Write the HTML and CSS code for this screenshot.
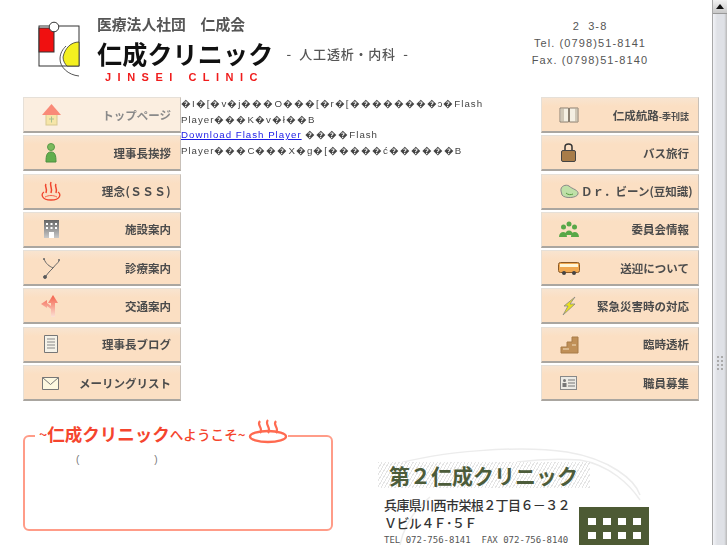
FILE: index.html
```html
<!DOCTYPE html>
<html lang="ja">
<head>
    <meta charset="UTF-8">
    <meta name="viewport" content="width=device-width, initial-scale=1.0">
    <title>仁成クリニック</title>
    <link rel="stylesheet" href="styles.css">
</head>
<body>
<div class="page">
    <div class="content">
        <div class="header">
            <svg class="logo" width="44" height="60" viewBox="0 0 44 60">
                <rect x="1" y="5" width="40" height="40" fill="#fff" stroke="#333" stroke-width="1"/>
                <rect x="1" y="7" width="15" height="24" fill="#f01010" stroke="#333" stroke-width="1"/>
                <path d="M41 45V21C33 21 27 27 25 36C25 40 27 43 29 45Z" fill="#f4f020" stroke="#333" stroke-width=".8"/>
                <path d="M41 55C30 54 22 46 22 38C22 32 25 28 28 25" fill="none" stroke="#555" stroke-width="1"/>
                <circle cx="16" cy="6" r="4.800" fill="#fff" stroke="#333" stroke-width="1"/>
            </svg>
            <div class="brand">
                <div class="corp">医療法人社団　仁成会</div>
                <div class="name-row">
                    <div class="name">仁成クリニック</div>
                    <div class="dept">-&nbsp; 人工透析・内科 &nbsp;-</div>
                </div>
                <div class="roman">JINSEI CLINIC</div>
            </div>
            <div class="contact">
                <div>2 &nbsp;3-8</div>
                <div>Tel. (0798)51-8141</div>
                <div>Fax. (0798)51-8140</div>
            </div>
        </div>

        <div class="columns">
            <div class="menu">
                <a class="btn btn-top">
                    <svg class="icon" width="24" height="24" viewBox="0 0 24 24"><rect x="7" y="11" width="11" height="11" fill="#f6e6a8" stroke="#d8c890"/><path d="M10 16h5M12.5 13.500v6" stroke="#a8c090"/><path d="M12.500 1L22 12H3Z" fill="#f98a78"/></svg>
                    <span>トップページ</span>
                </a>
                <a class="btn">
                    <svg class="icon" width="24" height="24" viewBox="0 0 24 24"><circle cx="12" cy="6" r="3.500" fill="#7cba5c" stroke="#5a9a48"/><path d="M7 21C7 14 8 11 12 11S17 14 17 21Z" fill="#62ae4c" stroke="#4c9040"/></svg>
                    <span>理事長挨拶</span>
                </a>
                <a class="btn">
                    <svg class="icon" width="24" height="24" viewBox="0 0 24 24" fill="none" stroke="#f0442c"><path d="M7 5C5 8 9 9 7 14M12 3C10 7 14 8 12 14M17 5C15 8 19 9 17 14" stroke-width="1.500"/><path d="M5 13C2 15 2 21 12 21S22 15 19 13" stroke-width="1.300"/><path d="M6 18C10 16 14 16 18 18" stroke-width=".8"/></svg>
                    <span class="wide">理念(ＳＳＳ)</span>
                </a>
                <a class="btn">
                    <svg class="icon" width="24" height="24" viewBox="0 0 24 24"><defs><linearGradient id="bld" x1="0" y1="0" x2="0" y2="1"><stop offset="0" stop-color="#666"/><stop offset="1" stop-color="#c8c8c8"/></linearGradient></defs><rect x="5" y="3" width="15" height="18" fill="url(#bld)"/><path d="M7 6h2v2H7zM11.500 6h2v2h-2zM16 6h2v2h-2zM7 10h2v2H7zM11.500 10h2v2h-2zM16 10h2v2h-2zM10 15h5v6h-5z" fill="#fff"/></svg>
                    <span>施設案内</span>
                </a>
                <a class="btn">
                    <svg class="icon" width="24" height="24" viewBox="0 0 24 24" fill="none" stroke="#666"><path d="M5 3C7 8 10 10 14 12C16 9 19 7 20 5" stroke-width="1"/><path d="M14 12C11 15 9 17 7 20" stroke-width="1"/><circle cx="6" cy="21" r="1.500" fill="#555"/><path d="M4 3h2M19 4h2" stroke-width="1.500"/></svg>
                    <span>診療案内</span>
                </a>
                <a class="btn">
                    <svg class="icon" width="24" height="24" viewBox="0 0 24 24"><defs><linearGradient id="arw" x1="0" y1="0" x2="0" y2="1"><stop offset="0" stop-color="#f4604a"/><stop offset="1" stop-color="#fbe0d4"/></linearGradient></defs><path d="M14 1L19 9H16V23H12V15L8 12V14L2 10L8 6V9L12 12V9H9Z" fill="url(#arw)"/></svg>
                    <span>交通案内</span>
                </a>
                <a class="btn">
                    <svg class="icon" width="24" height="24" viewBox="0 0 24 24"><path d="M5.500 3.500h13v17h-13z" fill="#f5f2e8" stroke="#777"/><path d="M8 7h8M8 10h8M8 13h8M8 16h8" stroke="#888"/></svg>
                    <span>理事長ブログ</span>
                </a>
                <a class="btn">
                    <svg class="icon" width="24" height="24" viewBox="0 0 24 24"><path d="M3.500 6.500h16v12h-16z" fill="#fdf8e0" stroke="#777"/><path d="M3.500 6.500l8 7 8-7" fill="none" stroke="#777"/></svg>
                    <span>メーリングリスト</span>
                </a>
            </div>

            <div class="flash">
                <p>�I�[�v�j���O���[�r�[��������ɔ�Flash Player���K�v�ł��B</p>
                <p><a href="#">Download Flash Player</a> ����Flash Player���C���X�g�[�����ć������B</p>
            </div>

            <div class="menu">
                <a class="btn">
                    <svg class="icon" width="24" height="24" viewBox="0 0 24 24"><path d="M3 5h8.500v14H3zM12.500 5H21v14h-8.500z" fill="#f4efe2" stroke="#8a7f70"/><path d="M4 5h3v14H4zM18 5h3v14h-3z" fill="#b8ac9a" opacity=".6"/></svg>
                    <span>仁成航路<small>-季刊誌</small></span>
                </a>
                <a class="btn">
                    <svg class="icon" width="24" height="24" viewBox="0 0 24 24"><path d="M8 10V6C8 2 15 2 15 6V10" fill="none" stroke="#333" stroke-width="1.500"/><rect x="4.500" y="9.500" width="14" height="11" rx="1.500" fill="#a87c48" stroke="#444"/></svg>
                    <span>バス旅行</span>
                </a>
                <a class="btn">
                    <svg class="icon" width="24" height="24" viewBox="0 0 24 24"><path d="M4 12C3 7 9 5 12 7C15 10 22 11 21 15C20 19 8 20 5 16Z" fill="#bfe0a8" stroke="#888"/><path d="M9 14C11 16 14 16 16 15" fill="none" stroke="#559a40"/></svg>
                    <span>Ｄｒ．ビーン(豆知識)</span>
                </a>
                <a class="btn">
                    <svg class="icon" width="24" height="24" viewBox="0 0 24 24" fill="#58a848"><circle cx="12" cy="7" r="2.500"/><circle cx="6.500" cy="10" r="2.500"/><circle cx="17.500" cy="10" r="2.500"/><path d="M8 18C8 12 16 12 16 18ZM2 20C2 14 10 13 10 20ZM14 20C14 13 22 14 22 20Z"/></svg>
                    <span>委員会情報</span>
                </a>
                <a class="btn">
                    <svg class="icon" width="24" height="24" viewBox="0 0 24 24"><rect x="1.500" y="6.500" width="21" height="10" rx="2" fill="#f0a850" stroke="#8a5a28"/><rect x="3" y="8" width="18" height="3" fill="#fff6d8"/><circle cx="7" cy="17" r="2" fill="#444"/><circle cx="17" cy="17" r="2" fill="#444"/></svg>
                    <span>送迎について</span>
                </a>
                <a class="btn">
                    <svg class="icon" width="24" height="24" viewBox="0 0 24 24"><path d="M18 3L7 12H11L6 21L18 10H13Z" fill="#e8e020" stroke="#888" stroke-width=".8"/></svg>
                    <span>緊急災害時の対応</span>
                </a>
                <a class="btn">
                    <svg class="icon" width="24" height="24" viewBox="0 0 24 24"><path d="M21 5H15V10H10V15H4V21H21Z" fill="#c09058" stroke="#a87c48"/><path d="M6 17h6M15 13h4" stroke="#f5e0c0"/></svg>
                    <span>臨時透析</span>
                </a>
                <a class="btn">
                    <svg class="icon" width="24" height="24" viewBox="0 0 24 24"><rect x="3.500" y="5.500" width="16" height="13" fill="#eceae4" stroke="#888"/><circle cx="7.500" cy="9.500" r="1.500" fill="#777"/><rect x="5.500" y="12" width="4" height="4" fill="#777"/><path d="M11 9h7M11 12h7M11 15h7" stroke="#777"/></svg>
                    <span>職員募集</span>
                </a>
            </div>
        </div>

        <div class="bottom">
            <div class="welcome">
                <div class="welcome-title">
                    <span class="wt-tilde">~</span><b>仁成クリニック</b><span class="wt-small">へようこそ~</span>
                    <svg width="40" height="26" viewBox="0 0 40 26" fill="none" stroke="#ff6a50"><ellipse cx="20" cy="18.500" rx="18" ry="5.500" fill="#fff" stroke-width="2.400"/><path d="M12 3C8 7 16 10 12 15M20 2C16 6 24 10 20 15M28 3C24 7 32 10 28 15" stroke-width="2.200"/></svg>
                </div>
                <div class="welcome-note"><span>(</span><span>)</span></div>
            </div>

            <div class="second">
                <svg class="arcs" width="300" height="110" viewBox="0 0 300 110" fill="none" stroke="#ececec" stroke-width="1.500"><path d="M43 30C90 16 170 10 217 17C260 24 285 45 290 60"/><path d="M167 27C190 24 215 24 230 25C260 30 280 50 290 65"/><path d="M50 110C54 90 64 75 80 62"/></svg>
                <div class="second-title">第２仁成クリニック</div>
                <div class="second-addr">兵庫県川西市栄根２丁目６－３２</div>
                <div class="second-addr">Ｖビル４Ｆ･５Ｆ</div>
                <div class="second-tel">TEL 072-756-8141&nbsp; FAX 072-756-8140</div>
                <div class="tower">
                    <i></i><i></i><i></i><i></i><i></i><i></i><i></i><i></i>
                </div>
            </div>
        </div>
    </div>

    <div class="scrollbar">
        <div class="scroll-up"></div>
        <div class="scroll-thumb">
            <div class="grip"></div>
        </div>
    </div>
</div>
</body>
</html>
```

FILE: styles.css
```css
html, body {
    margin: 0;
    height: 100%;
    overflow: hidden;
    background: #fff;
}
body {
    font-family: "Liberation Sans", Arial, sans-serif;
}
.page {
    display: flex;
    height: 545px;
    overflow: hidden;
}
.content {
    width: 712px;
    flex: none;
}

/* header */
.header {
    display: flex;
    height: 97px;
    box-sizing: border-box;
    padding: 20px 0 0 38px;
}
.logo {
    flex: none;
    margin-top: 1px;
}
.brand {
    margin-left: 15px;
    width: 325px;
    font-family: "Noto Sans CJK JP", sans-serif;
    filter: blur(.3px);
}
.corp {
    margin-top: -7px;
    font-size: 14.800px;
    line-height: 22px;
    font-weight: 700;
    color: #555;
}
.name-row {
    display: flex;
    align-items: center;
    margin-top: 3px;
}
.name {
    font-size: 25px;
    line-height: 30px;
    font-weight: 700;
    color: #111;
    letter-spacing: .2px;
}
.dept {
    margin-left: 13px;
    font-size: 13px;
    color: #555;
    white-space: nowrap;
    font-weight: 500;
    letter-spacing: .8px;
}
.roman {
    margin: 3px 0 0 8px;
    font-family: "Liberation Sans", sans-serif;
    font-size: 11px;
    line-height: 13px;
    font-weight: 700;
    letter-spacing: 6.500px;
    color: #f01c1c;
}
.contact {
    width: 128px;
    margin-left: 104px;
    text-align: center;
    font-size: 11px;
    line-height: 17px;
    letter-spacing: 1.100px;
    color: #555;
    margin-top: -2px;
}

/* three columns */
.columns {
    display: grid;
    grid-template-columns: 158px 1fr 158px;
    padding: 0 13px 0 23px;
}
.menu {
    display: flex;
    flex-direction: column;
    gap: 2.300px;
}
.btn {
    display: flex;
    align-items: center;
    height: 36px;
    box-sizing: border-box;
    padding: 0 9px 0 15px;
    background: linear-gradient(#f8e4d0, #fbdfc3 25%);
    border: 1px solid #e6e0d8;
    border-bottom: 2px solid #aaa6a0;
    border-right-color: #c8c0b8;
    font-family: "Noto Sans CJK JP", sans-serif;
    font-size: 11.500px;
    font-weight: 700;
    color: #4c4c4c;
    white-space: nowrap;
}
.btn-top {
    background: #fbeee0;
    color: #8a8a8a;
}
.btn span {
    margin-left: auto;
    filter: blur(.3px);
}
.btn .wide {
    letter-spacing: .45px;
}
.btn small {
    font-size: 9px;
}
.icon {
    flex: none;
}

/* flash message */
.flash {
    margin-top: -1px;
    font-size: 9.700px;
    line-height: 15.700px;
    letter-spacing: 1px;
    color: #444;
    filter: blur(.2px);
}
.flash p {
    margin: 0;
    width: 305px;
}
.flash a {
    color: #1a1ae6;
}

/* bottom row */
.bottom {
    display: flex;
    padding-left: 23px;
    padding-top: 34px;
}
.welcome {
    position: relative;
    box-sizing: border-box;
    width: 310px;
    height: 96px;
    border: 2px solid #ff9c88;
    border-radius: 6px;
    flex: none;
}
.welcome-title {
    position: absolute;
    left: 10px;
    top: -15px;
    display: flex;
    align-items: center;
    padding: 0 0 0 4px;
    background: #fff;
    color: #f5452e;
    font-family: "Noto Sans CJK JP", sans-serif;
    line-height: 24px;
    white-space: nowrap;
}
.welcome-title b {
    font-size: 17.500px;
}
.wt-tilde {
    font-size: 14.500px;
    font-weight: 500;
}
.wt-small {
    font-size: 13.600px;
    font-weight: 500;
}
.welcome-title svg {
    flex: none;
    margin-left: 3px;
    margin-top: -6px;
}
.welcome-note {
    display: flex;
    gap: 75px;
    padding: 17px 0 0 51px;
    font-size: 10px;
    color: #777;
}

.second {
    position: relative;
    margin-left: 51px;
    padding-top: 27px;
    font-family: "Noto Sans CJK JP", sans-serif;
    white-space: nowrap;
}
.arcs {
    position: absolute;
    left: -34px;
    top: 0;
}
.second-title {
    position: relative;
    margin-left: -6px;
    padding-left: 11px;
    width: 201px;
    font-size: 21px;
    line-height: 26px;
    font-weight: 700;
    color: #4c5c3a;
    background: repeating-linear-gradient(120deg, #e4e4e4 0 1px, #fff 1px 3px);
}
.second-addr {
    position: relative;
    font-size: 13px;
    line-height: 18px;
    letter-spacing: -.6px;
    font-weight: 500;
    color: #333;
}
.second-title + .second-addr {
    margin-top: 8px;
}
.second-tel {
    position: relative;
    margin-top: 1px;
    font-family: "DejaVu Sans Mono", monospace;
    font-size: 9px;
    line-height: 15px;
    color: #555;
}
.tower {
    position: absolute;
    left: 195px;
    top: 72px;
    width: 70px;
    height: 60px;
    box-sizing: border-box;
    padding: 11px 0 0 9px;
    display: grid;
    grid-template-columns: repeat(4, 8px);
    grid-auto-rows: 7px;
    gap: 7px;
    background: #4d5a34;
}
.tower i {
    background: #fff;
}

/* fake scrollbar */
.scrollbar {
    width: 15px;
    flex: none;
    background: #dfe1e6;
    border-left: 1px solid #a8a8a8;
    box-sizing: border-box;
}
.scroll-up {
    height: 14px;
    box-sizing: border-box;
    background: linear-gradient(#f2f2f2, #c8c8c8);
    border-bottom: 1px solid #999;
    position: relative;
}
.scroll-up::after {
    content: "";
    position: absolute;
    left: 3px;
    top: 4px;
    border: 4px solid transparent;
    border-top: 0;
    border-bottom: 5px solid #111;
}
.scroll-thumb {
    height: 531px;
    box-sizing: border-box;
    padding-top: 341px;
    background: linear-gradient(90deg, #f2f3f7, #dfe1e6 30%, #dfe1e6 80%, #b8b8b8);
}
.grip {
    width: 8px;
    height: 16px;
    margin: 0 auto;
    background: radial-gradient(circle, #aaa 0.8px, transparent 1px) 0 0 / 4px 4px;
}
```
